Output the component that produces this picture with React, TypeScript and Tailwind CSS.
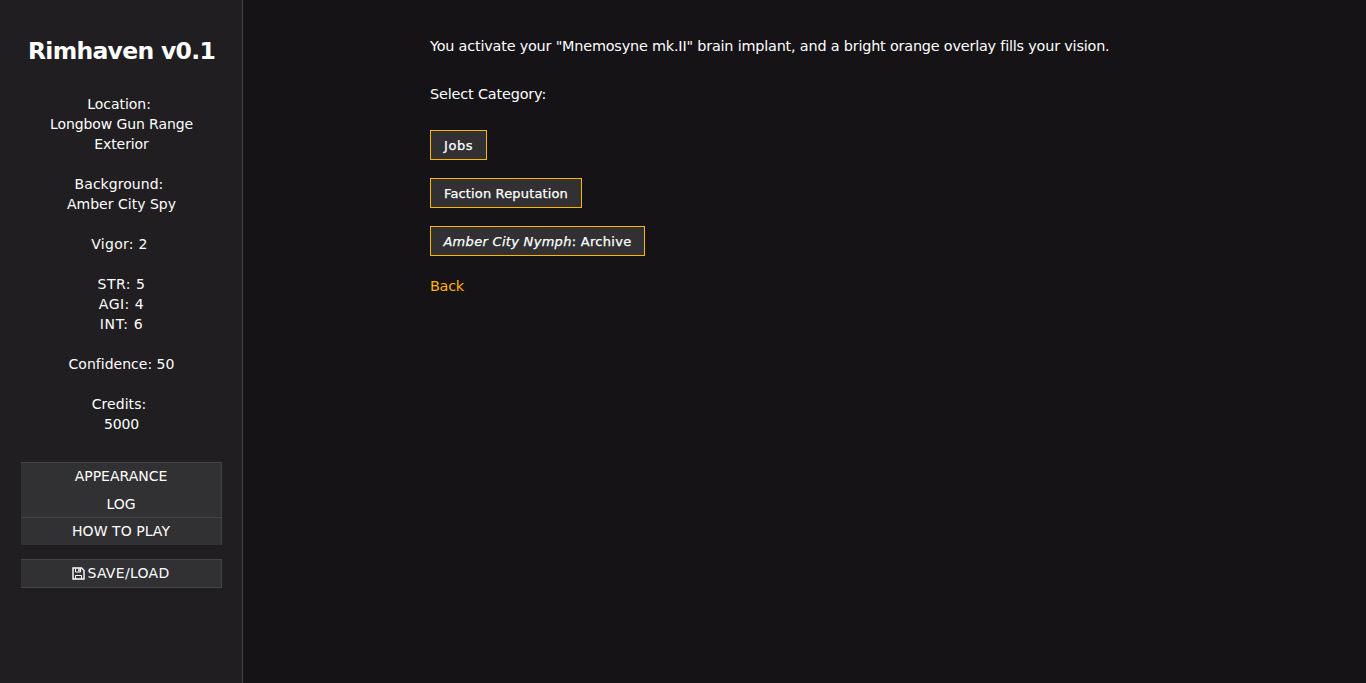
import React from 'react';

interface StatLine {
  text: string;
  className: string;
}

const stats: StatLine[][] = [
  [
    { text: 'Location:', className: 'pr-[5px] tracking-[-0.02px]' },
    { text: 'Longbow Gun Range', className: '' },
    { text: 'Exterior', className: '' },
  ],
  [
    { text: 'Background:', className: 'pr-[5px] tracking-[0.05px]' },
    { text: 'Amber City Spy', className: 'tracking-[0.02px]' },
  ],
  [{ text: 'Vigor: 2', className: 'pr-[4px] tracking-[0.3px]' }],
  [
    { text: 'STR: 5', className: 'tracking-[0.5px]' },
    { text: 'AGI: 4', className: 'tracking-[0.5px]' },
    { text: 'INT: 6', className: 'tracking-[0.6px]' },
  ],
  [{ text: 'Confidence: 50', className: 'tracking-[0.02px]' }],
  [
    { text: 'Credits:', className: 'pr-[5px] tracking-[0.05px]' },
    { text: '5000', className: '' },
  ],
];

const SaveIcon: React.FC = () => (
  <svg width="13" height="13" viewBox="0 0 13 13" fill="none" stroke="#fff" className="mr-[2px] shrink-0">
    <path d="M1 1h8.5L12 3.5V12H1z" strokeWidth="1.4" />
    <path d="M3.5 12V8.5h6V12" />
    <path d="M3.5 1.5V5h5V1.5" />
    <path d="M7 1.5v3" strokeWidth="1.5" />
  </svg>
);

const Sidebar: React.FC = () => (
  <aside className="flex w-[243px] shrink-0 flex-col border-r border-[#444] bg-[#201e21] pl-[21px] pr-5 text-center">
    <h1 className="mt-[36px] whitespace-nowrap text-[23.5px] font-bold leading-[30px] tracking-[-0.7px]">Rimhaven v0.1</h1>
    <div className="mt-[28px] space-y-5 text-[14px] leading-5 tracking-[-0.1px]">
      {stats.map((group) => (
        <div key={group[0].text}>
          {group.map((line) => (
            <p key={line.text} className={line.className}>{line.text}</p>
          ))}
        </div>
      ))}
    </div>
    <nav className="mt-7 flex flex-col text-[14px]">
      <button className="h-7 border-r border-t border-[#444346] bg-[#313033]">APPEARANCE</button>
      <button className="h-[27px] border-r border-[#444346] bg-[#313033] pt-px tracking-[-0.1px]">LOG</button>
      <button className="h-7 border-r border-t border-[#444346] bg-[#313033] tracking-[0.05px]">HOW TO PLAY</button>
      <button className="mt-[14px] flex h-[29px] items-center justify-center border-y border-r border-[#444346] bg-[#313033] tracking-[0.3px]">
        <SaveIcon />
        SAVE/LOAD
      </button>
    </nav>
  </aside>
);

export default function App() {
  return (
    <div className="flex h-screen overflow-hidden bg-[#151316] font-['DejaVu_Sans',sans-serif] text-white">
      <Sidebar />
      <main className="flex flex-1 flex-col items-start pl-[187px] pt-[34px] text-[14.4px] leading-6">
        <p className="whitespace-nowrap tracking-[-0.19px]">You activate your "Mnemosyne mk.II" brain implant, and a bright orange overlay fills your vision.</p>
        <p className="mt-6 tracking-[-0.15px]">Select Category:</p>
        <div className="mt-6 flex flex-col items-start gap-[18px] whitespace-nowrap text-[13px] leading-[28px] [-webkit-text-stroke:0.25px_#fff]">
          <button className="h-[30px] w-[57px] border border-[#ffb400] bg-[#313033] pt-px tracking-[0.5px]">Jobs</button>
          <button className="h-[30px] w-[152px] border border-[#ffb400] bg-[#313033] pt-px tracking-[0.15px]">Faction Reputation</button>
          <button className="h-[30px] w-[215px] border border-[#ffb400] bg-[#313033] pt-px tracking-[0.3px]">
            <em>Amber City Nymph</em>: Archive
          </button>
        </div>
        <a className="mt-[18px] tracking-[-0.25px] text-[#ffb400]">Back</a>
      </main>
    </div>
  );
}
